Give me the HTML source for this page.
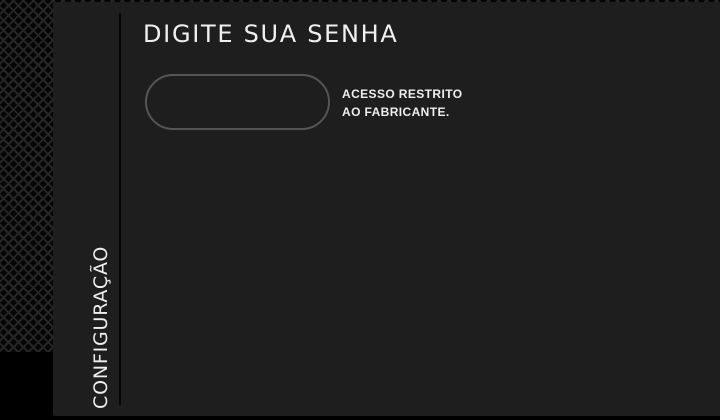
<!DOCTYPE html>
<html><head><style>
html,body{margin:0;padding:0;width:720px;height:420px;overflow:hidden;background:#000;}
.pat{position:absolute;left:0;top:0;width:720px;height:352px;
background:
repeating-linear-gradient(45deg,transparent 0 5px,#262626 5px 7px),
repeating-linear-gradient(-45deg,#050505 0 5px,#262626 5px 7px);}
.panel{position:absolute;left:53px;top:2px;width:680px;height:414px;background:#1e1e1e;border-radius:2px;}
.vline{position:absolute;left:119px;top:13px;width:2px;height:392px;background:#050505;}
.vt{position:absolute;left:92px;top:409px;transform-origin:0 0;transform:rotate(-90deg);
font-family:"DejaVu Sans","Liberation Sans",sans-serif;font-size:19px;line-height:19px;color:#eee;white-space:nowrap;letter-spacing:0.8px;}
h1{position:absolute;left:143px;top:20px;margin:0;font-family:"DejaVu Sans","Liberation Sans",sans-serif;font-weight:normal;font-size:24px;color:#f0f0f0;letter-spacing:1.7px;}
.pill{position:absolute;left:145px;top:74px;width:181px;height:52px;border:2px solid #555;border-radius:28px;}
.note{position:absolute;left:342px;top:85px;font-family:"Liberation Sans",sans-serif;font-weight:bold;font-size:12px;line-height:18px;color:#eee;letter-spacing:0.4px;}
</style></head><body>
<div class="pat"></div>
<div class="panel"></div>
<div class="vline"></div>
<div class="vt">CONFIGURAÇÃO</div>
<h1>DIGITE SUA SENHA</h1>
<div class="pill"></div>
<div class="note">ACESSO RESTRITO<br>AO FABRICANTE.</div>
</body></html>
